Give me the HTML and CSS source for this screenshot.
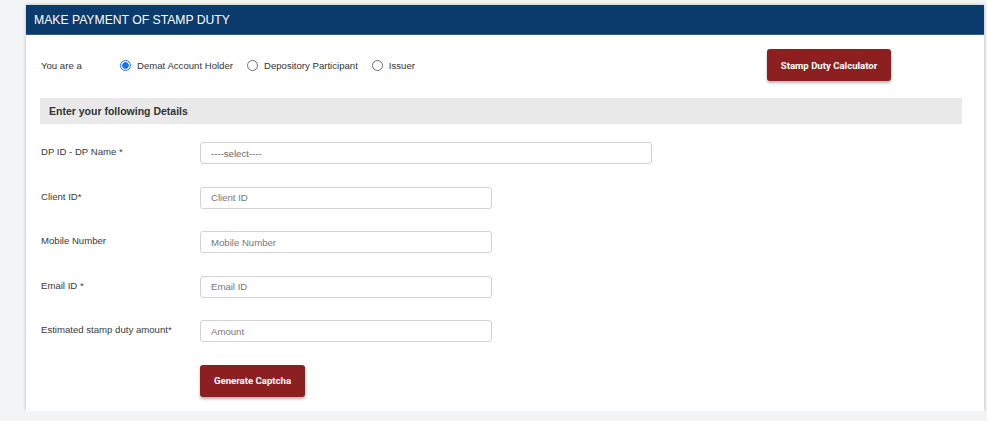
FILE: index.html
```html
<!DOCTYPE html>
<html lang="en">
<head>
<meta charset="utf-8">
<title>Make Payment of Stamp Duty</title>
<link rel="stylesheet" href="styles.css">
</head>
<body>
<div class="page">
  <div class="card">
    <div class="card-header">MAKE PAYMENT OF STAMP DUTY</div>
    <div class="card-body">
      <div class="role-row">
        <span class="role-label">You are a</span>
        <div class="radio-group">
          <label class="radio-option"><input type="radio" name="role" class="radio" checked><span>Demat Account Holder</span></label>
          <label class="radio-option"><input type="radio" name="role" class="radio"><span>Depository Participant</span></label>
          <label class="radio-option radio-last"><input type="radio" name="role" class="radio"><span>Issuer</span></label>
        </div>
        <button class="btn btn-calc" type="button">Stamp Duty Calculator</button>
      </div>

      <div class="section-title">Enter your following Details</div>

      <form class="form">
        <div class="form-row">
          <label class="form-label">DP ID - DP Name *</label>
          <select class="field field-wide"><option>----select----</option></select>
        </div>
        <div class="form-row">
          <label class="form-label">Client ID*</label>
          <input class="field" type="text" placeholder="Client ID">
        </div>
        <div class="form-row">
          <label class="form-label">Mobile Number</label>
          <input class="field" type="text" placeholder="Mobile Number">
        </div>
        <div class="form-row">
          <label class="form-label">Email ID *</label>
          <input class="field" type="text" placeholder="Email ID">
        </div>
        <div class="form-row">
          <label class="form-label">Estimated stamp duty amount*</label>
          <input class="field" type="text" placeholder="Amount">
        </div>
        <div class="form-actions">
          <button class="btn btn-captcha" type="button">Generate Captcha</button>
        </div>
      </form>
    </div>
  </div>
</div>
</body>
</html>
```

FILE: styles.css
```css
* { box-sizing: border-box; }

html, body {
  margin: 0;
  padding: 0;
  background: #f3f4f5;
  font-family: "Liberation Sans", Arial, sans-serif;
  color: #333;
}

.page {
  padding: 5px 3px 0 26px;
}

.card {
  background: #fff;
  box-shadow: 0 0 3px rgba(0, 0, 0, 0.28);
}

.card-header {
  height: 30px;
  background: #0a3b6c;
  border-bottom: 1px solid #2f5b88;
  color: #fff;
  font-size: 12.2px;
  padding-left: 8px;
  padding-top: 1px;
  display: flex;
  align-items: center;
}

.card-body {
  padding: 14px 22px 14px 14px;
}

.role-row {
  display: flex;
  align-items: center;
  height: 32px;
  font-size: 9.6px;
}

.role-label {
  width: 80px;
  padding-left: 1px;
}

.radio-group {
  display: flex;
  align-items: center;
}

.radio-option {
  display: flex;
  align-items: center;
  gap: 6px;
  margin-right: 14px;
}

.radio-last { margin-right: 0; }

.radio {
  appearance: none;
  -webkit-appearance: none;
  margin: 0;
  width: 11px;
  height: 11px;
  border: 1px solid #6f6f6f;
  border-radius: 50%;
  background: #fff;
}

.radio:checked {
  border-color: #1a73e8;
  background: radial-gradient(circle, #1a73e8 0 3px, #fff 3.5px);
}

.btn {
  border: none;
  border-radius: 3px;
  background: #8c1f1f;
  color: #fff;
  font-family: Roboto, "Liberation Sans", sans-serif;
  font-weight: 700;
  font-size: 9.6px;
  box-shadow: 0 2px 3px rgba(0, 0, 0, 0.3);
  height: 32px;
  padding: 0;
}

.btn-calc {
  margin-left: auto;
  margin-right: 71px;
  width: 124px;
}

.section-title {
  margin-top: 17px;
  height: 26px;
  background: #e9e9e9;
  padding-left: 9px;
  display: flex;
  align-items: center;
  font-weight: 700;
  font-size: 10.5px;
  color: #333;
}

.form {
  margin-top: 18px;
  display: flex;
  flex-direction: column;
  gap: 22.5px;
}

.form-row {
  display: grid;
  grid-template-columns: 160px auto;
  align-items: center;
}

.form-label {
  font-size: 9.6px;
  padding-left: 1px;
  padding-bottom: 3px;
  color: #3a3a3a;
}

.field {
  width: 292px;
  height: 22px;
  border: 1px solid #d2d2d2;
  border-radius: 3px;
  padding: 0 10px;
  font-family: "Liberation Sans", Arial, sans-serif;
  font-size: 9.6px;
  color: #666;
  background: #fff;
  outline: none;
}

.field::placeholder { color: #777; }

.field-wide {
  width: 452px;
  appearance: none;
  -webkit-appearance: none;
}

.form-actions {
  padding-left: 160px;
}

.btn-captcha {
  width: 105px;
}
```
